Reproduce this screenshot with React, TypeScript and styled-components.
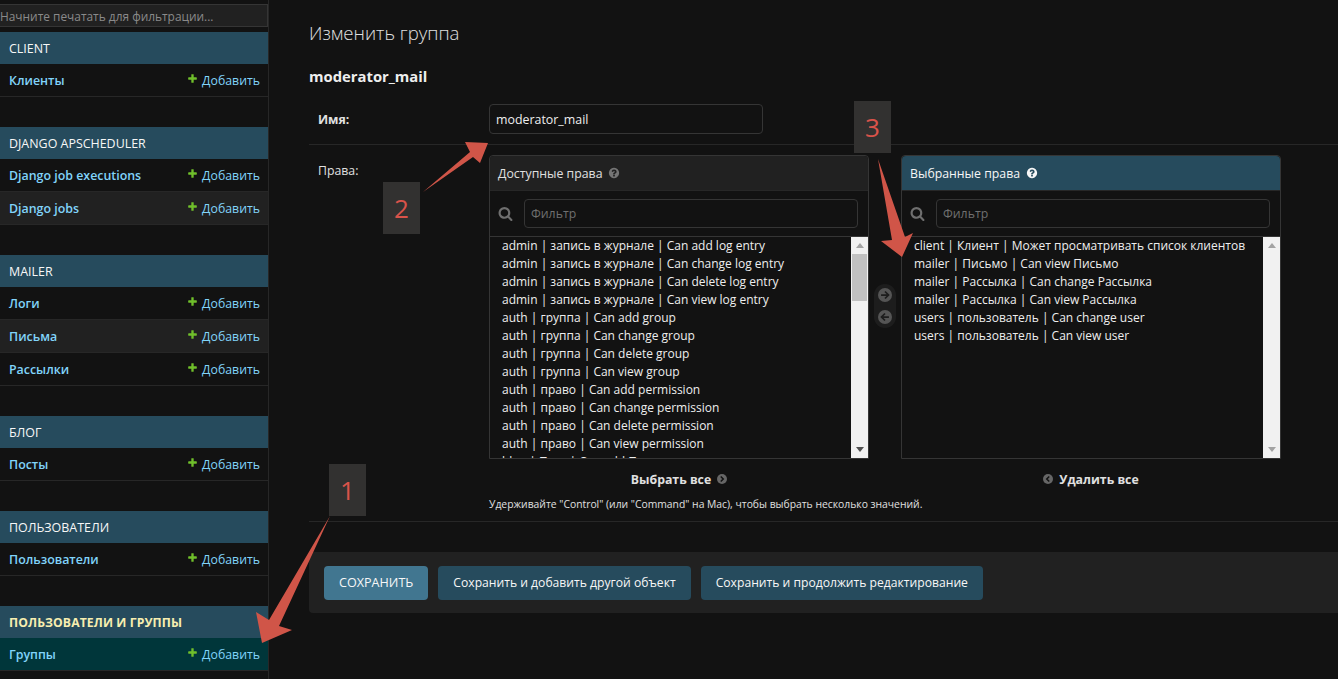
import React from "react";
import styled, { createGlobalStyle } from "styled-components";

const FONT = `"Open Sans", "Noto Sans", sans-serif`;

const GlobalStyle = createGlobalStyle`
	html, body {
		margin: 0;
		height: 100%;
		background: #121212;
		overflow: hidden;
	}
	* {
		box-sizing: border-box;
	}
`;

const Page = styled.div`
	position: relative;
	width: 1338px;
	height: 679px;
	display: flex;
	overflow: hidden;
	font-family: ${FONT};
	font-size: 13px;
	color: #eeeeee;
	background: #121212;
`;

const Sidebar = styled.nav`
	width: 269px;
	height: 679px;
	flex: none;
	border-right: 1px solid #272727;
	padding-top: 4px;
`;

const NavFilter = styled.input`
	display: block;
	width: 268px;
	height: 23px;
	margin-bottom: 5px;
	padding: 0;
	background: #212121;
	border: 1px solid #353535;
	border-left: 0;
	color: #eeeeee;
	font-family: ${FONT};
	font-size: 11.9px;
	&::placeholder {
		color: #8a8a8a;
		opacity: 1;
	}
`;

const AppSection = styled.section`
	margin-bottom: 30px;
`;

const AppHeader = styled.div<{ $current?: boolean }>`
	height: 32px;
	padding-left: 9px;
	display: flex;
	align-items: center;
	background: #264b5d;
	font-size: ${p => (p.$current ? "12.2px" : "12.45px")};
	font-weight: ${p => (p.$current ? 700 : 400)};
	color: ${p => (p.$current ? "#f7eeb0" : "#f7f7f7")};
	letter-spacing: ${p => (p.$current ? "0.1px" : "0")};
`;

const ModelRow = styled.div<{ $alt?: boolean; $current?: boolean }>`
	height: 33px;
	padding: 0 8px 0 9px;
	display: flex;
	align-items: center;
	justify-content: space-between;
	border-bottom: 1px solid #272727;
	background: ${p => (p.$current ? "#00363a" : p.$alt ? "#212121" : "#121212")};
`;

const ModelLink = styled.span`
	color: #81d4fa;
	font-size: 12.4px;
	font-weight: 600;
`;

const AddLink = styled.span`
	display: flex;
	align-items: center;
	gap: 4px;
	color: #81d4fa;
	font-size: 12.3px;
`;

const AddIcon = styled.svg`
	width: 11px;
	height: 11px;
	margin-top: -3px;
	fill: #70bf2b;
`;

const Main = styled.main`
	flex: 1;
	min-width: 0;
	padding: 20px 0 0 40px;
`;

const Title = styled.h1`
	margin: 0;
	height: 25px;
	line-height: 25px;
	font-size: 18.6px;
	font-weight: 300;
	color: #e0e0e0;
`;

const ObjectName = styled.h2`
	margin: 20px 0 0;
	height: 22px;
	line-height: 22px;
	font-size: 14.8px;
	font-weight: 700;
	color: #eeeeee;
`;

const FormRow = styled.div`
	display: flex;
	border-bottom: 1px solid #272727;
`;

const NameRow = styled(FormRow)`
	height: 47px;
	margin-top: 11px;
	padding-bottom: 4px;
	align-items: center;
`;

const FieldLabel = styled.label<{ $required?: boolean }>`
	display: block;
	width: 180px;
	flex: none;
	padding-left: 9px;
	font-size: 12.3px;
	font-weight: ${p => (p.$required ? 700 : 400)};
	color: #e0e0e0;
`;

const TextInput = styled.input`
	width: 274px;
	height: 30px;
	padding: 0 6px;
	background: #121212;
	border: 1px solid #353535;
	border-radius: 4px;
	color: #eeeeee;
	font-family: ${FONT};
	font-size: 12.4px;
`;

const PermissionsRow = styled(FormRow)`
	height: 377px;
	padding-top: 10px;
`;

const PermissionsLabel = styled(FieldLabel)`
	padding-top: 7px;
`;

const PermissionsBody = styled.div`
	width: 792px;
	flex: none;
`;

const Selector = styled.div`
	display: flex;
`;

const SelectorBox = styled.div`
	width: 380px;
	height: 304px;
	flex: none;
	display: flex;
	flex-direction: column;
	border: 1px solid #353535;
	border-radius: 4px 4px 0 0;
`;

const BoxTitle = styled.div<{ $chosen?: boolean }>`
	height: 35px;
	flex: none;
	display: flex;
	align-items: center;
	gap: 6px;
	padding-left: 8px;
	font-size: 12.3px;
	color: ${p => (p.$chosen ? "#f7f7f7" : "#e0e0e0")};
	background: ${p => (p.$chosen ? "#264b5d" : "#212121")};
	border-bottom: 1px solid #272727;
	border-radius: 4px 4px 0 0;
`;

const HelpIcon = styled.svg<{ $chosen?: boolean }>`
	width: 12px;
	height: 12px;
	fill: ${p => (p.$chosen ? "#f7f7f7" : "#757575")};
`;

const FilterBar = styled.div`
	height: 46px;
	flex: none;
	display: flex;
	align-items: center;
	gap: 11px;
	padding: 0 10px 1px 8px;
	border-bottom: 1px solid #353535;
`;

const SearchIcon = styled.svg`
	width: 15px;
	height: 15px;
	flex: none;
	fill: #6f6f6f;
`;

const FilterInput = styled.input`
	flex: 1;
	min-width: 0;
	height: 29px;
	padding: 0 6px;
	background: #121212;
	border: 1px solid #353535;
	border-radius: 4px;
	font-family: ${FONT};
	font-size: 12.3px;
	&::placeholder {
		color: #6f6f6f;
		opacity: 1;
	}
`;

const ListArea = styled.div`
	flex: 1;
	min-height: 0;
	display: flex;
`;

const OptionList = styled.div`
	flex: 1;
	min-width: 0;
	overflow: hidden;
	padding-left: 12px;
`;

const OptionRow = styled.div`
	height: 18px;
	line-height: 18px;
	font-size: 12px;
	white-space: nowrap;
	color: #eeeeee;
`;

const ScrollTrack = styled.div`
	position: relative;
	width: 17px;
	flex: none;
	background: #f1f1f1;
`;

const ScrollThumb = styled.div`
	position: absolute;
	left: 1px;
	right: 1px;
	top: 17px;
	height: 47px;
	background: #c1c1c1;
`;

const ScrollArrow = styled.div<{ $down?: boolean; $dim?: boolean }>`
	position: absolute;
	left: 4.5px;
	${p => (p.$down ? "bottom: 6px;" : "top: 6px;")}
	width: 0;
	height: 0;
	border-left: 4px solid transparent;
	border-right: 4px solid transparent;
	${p => (p.$down ? `border-top: 5px solid ${p.$dim ? "#a3a3a3" : "#505050"};` : "border-bottom: 5px solid #a3a3a3;")}
`;

const Movers = styled.div`
	width: 32px;
	flex: none;
	display: flex;
	justify-content: center;
	padding-top: 129px;
`;

const MoverPill = styled.div`
	width: 22px;
	height: 44px;
	display: flex;
	flex-direction: column;
	align-items: center;
	justify-content: center;
	gap: 8px;
	background: #1d1d1d;
	border-radius: 11px;
`;

const CircleIcon = styled.svg<{ $size: number }>`
	width: ${p => p.$size}px;
	height: ${p => p.$size}px;
	flex: none;
`;

const ChooseRow = styled.div`
	display: flex;
	gap: 32px;
	margin-top: 10px;
`;

const ChooseLink = styled.div`
	width: 380px;
	height: 20px;
	display: flex;
	align-items: center;
	justify-content: center;
	gap: 6px;
	font-size: 12.3px;
	font-weight: 700;
	color: #e0e0e0;
`;

const HelpText = styled.p`
	margin: 6px 0 0;
	height: 18px;
	line-height: 18px;
	font-size: 10.35px;
	color: #e0e0e0;
`;

const SubmitRow = styled.div`
	height: 61px;
	margin-top: 30px;
	display: flex;
	align-items: center;
	gap: 10px;
	padding-left: 15px;
	background: #212121;
	border-radius: 4px 0 0 4px;
`;

const SaveButton = styled.button<{ $primary?: boolean }>`
	height: 34px;
	padding: 0 15px;
	border: 0;
	border-radius: 4px;
	background: ${p => (p.$primary ? "#417690" : "#264b5d")};
	color: #f7f7f7;
	font-family: ${FONT};
	font-size: ${p => (p.$primary ? "12.6px" : "12.15px")};
	white-space: nowrap;
`;

const Marker = styled.div<{ $x: number; $y: number }>`
	position: absolute;
	left: ${p => p.$x}px;
	top: ${p => p.$y}px;
	width: 37px;
	height: 52px;
	display: flex;
	align-items: center;
	justify-content: center;
	background: #323130;
	color: #d9534a;
	font-size: 26px;
`;

const ArrowLayer = styled.svg`
	position: absolute;
	left: 0;
	top: 0;
	width: 1338px;
	height: 679px;
	pointer-events: none;
	fill: #d05548;
`;

const PLUS =
	"M1600 796v192q0 40-28 68t-68 28h-416v416q0 40-28 68t-68 28h-192q-40 0-68-28t-28-68v-416h-416q-40 0-68-28t-28-68v-192q0-40 28-68t68-28h416v-416q0-40 28-68t68-28h192q40 0 68 28t28 68v416h416q40 0 68 28t28 68z";
const QUESTION =
	"M1024 1376v-192q0-14-9-23t-23-9h-192q-14 0-23 9t-9 23v192q0 14 9 23t23 9h192q14 0 23-9t9-23zm256-672q0-88-55.5-163t-138.5-116-170-41q-243 0-371 213-15 24 8 42l132 100q7 6 19 6 16 0 25-12 53-68 86-92 34-24 86-24 48 0 85.5 26t37.5 59q0 38-20 61t-68 45q-63 28-115.5 86.5t-52.5 125.5v36q0 14 9 23t23 9h192q14 0 23-9t9-23q0-19 21.5-49.5t54.5-49.5q32-18 49-28.5t46-35 44.5-48 28-60.5 12.5-81zm384 192q0 209-103 385.5t-279.5 279.5-385.5 103-385.5-103-279.5-279.5-103-385.5 103-385.5 279.5-279.5 385.5-103 385.5 103 279.5 279.5 103 385.5z";
const SEARCH =
	"M1216 832q0-185-131.5-316.5t-316.5-131.5-316.5 131.5-131.5 316.5 131.5 316.5 316.5 131.5 316.5-131.5 131.5-316.5zm512 832q0 52-38 90t-90 38q-54 0-90-38l-343-342q-179 124-399 124-143 0-273.5-55.5t-225-150-150-225-55.5-273.5 55.5-273.5 150-225 225-150 273.5-55.5 273.5 55.5 225 150 150 225 55.5 273.5q0 220-124 399l343 343q37 37 37 90z";

const NAV = [
	{ title: "CLIENT", models: ["Клиенты"] },
	{ title: "DJANGO APSCHEDULER", models: ["Django job executions", "Django jobs"] },
	{ title: "MAILER", models: ["Логи", "Письма", "Рассылки"] },
	{ title: "БЛОГ", models: ["Посты"] },
	{ title: "ПОЛЬЗОВАТЕЛИ", models: ["Пользователи"] },
	{ title: "ПОЛЬЗОВАТЕЛИ И ГРУППЫ", models: ["Группы"], current: true }
];

const AVAILABLE = [
	"admin | запись в журнале | Can add log entry",
	"admin | запись в журнале | Can change log entry",
	"admin | запись в журнале | Can delete log entry",
	"admin | запись в журнале | Can view log entry",
	"auth | группа | Can add group",
	"auth | группа | Can change group",
	"auth | группа | Can delete group",
	"auth | группа | Can view group",
	"auth | право | Can add permission",
	"auth | право | Can change permission",
	"auth | право | Can delete permission",
	"auth | право | Can view permission",
	"blog | Пост | Can add Пост"
];

const CHOSEN = [
	"client | Клиент | Может просматривать список клиентов",
	"mailer | Письмо | Can view Письмо",
	"mailer | Рассылка | Can change Рассылка",
	"mailer | Рассылка | Can view Рассылка",
	"users | пользователь | Can change user",
	"users | пользователь | Can view user"
];

const ArrowCircle = ({ left }: { left?: boolean }) => (
	<CircleIcon $size={14} viewBox="0 0 16 16">
		<circle cx="8" cy="8" r="8" fill="#555555" />
		<g transform={left ? "rotate(180 8 8)" : undefined} fill="none" stroke="#1d1d1d" strokeWidth="2">
			<path d="M3.5 8h8M8 4l4 4-4 4" />
		</g>
	</CircleIcon>
);

const ChevronCircle = ({ left }: { left?: boolean }) => (
	<CircleIcon $size={10} viewBox="0 0 16 16">
		<circle cx="8" cy="8" r="8" fill="#666666" />
		<path d={left ? "M10 4L6 8l4 4" : "M6 4l4 4-4 4"} fill="none" stroke="#121212" strokeWidth="2.4" />
	</CircleIcon>
);

const PermissionBox = ({ title, options, chosen }: { title: string; options: string[]; chosen?: boolean }) => (
	<SelectorBox>
		<BoxTitle $chosen={chosen}>
			{title}
			<HelpIcon $chosen={chosen} viewBox="0 0 1792 1792">
				<path d={QUESTION} />
			</HelpIcon>
		</BoxTitle>
		<FilterBar>
			<SearchIcon viewBox="0 0 1792 1792">
				<path d={SEARCH} />
			</SearchIcon>
			<FilterInput placeholder="Фильтр" />
		</FilterBar>
		<ListArea>
			<OptionList>
				{options.map(option => (
					<OptionRow key={option}>{option}</OptionRow>
				))}
			</OptionList>
			<ScrollTrack>
				<ScrollArrow $dim={chosen} />
				{!chosen && <ScrollThumb />}
				<ScrollArrow $down $dim={chosen} />
			</ScrollTrack>
		</ListArea>
	</SelectorBox>
);

export default function App() {
	return (
		<Page>
			<GlobalStyle />
			<Sidebar>
				<NavFilter placeholder="Начните печатать для фильтрации..." />
				{NAV.map(app => (
					<AppSection key={app.title}>
						<AppHeader $current={app.current}>{app.title}</AppHeader>
						{app.models.map((model, i) => (
							<ModelRow key={model} $alt={i % 2 === 1} $current={app.current}>
								<ModelLink>{model}</ModelLink>
								<AddLink>
									<AddIcon viewBox="0 0 1792 1792">
										<path d={PLUS} />
									</AddIcon>
									Добавить
								</AddLink>
							</ModelRow>
						))}
					</AppSection>
				))}
			</Sidebar>
			<Main>
				<Title>Изменить группа</Title>
				<ObjectName>moderator_mail</ObjectName>
				<NameRow>
					<FieldLabel $required>Имя:</FieldLabel>
					<TextInput defaultValue="moderator_mail" />
				</NameRow>
				<PermissionsRow>
					<PermissionsLabel>Права:</PermissionsLabel>
					<PermissionsBody>
						<Selector>
							<PermissionBox title="Доступные права" options={AVAILABLE} />
							<Movers>
								<MoverPill>
									<ArrowCircle />
									<ArrowCircle left />
								</MoverPill>
							</Movers>
							<PermissionBox title="Выбранные права" options={CHOSEN} chosen />
						</Selector>
						<ChooseRow>
							<ChooseLink>
								Выбрать все
								<ChevronCircle />
							</ChooseLink>
							<ChooseLink>
								<ChevronCircle left />
								Удалить все
							</ChooseLink>
						</ChooseRow>
						<HelpText>Удерживайте "Control" (или "Command" на Mac), чтобы выбрать несколько значений.</HelpText>
					</PermissionsBody>
				</PermissionsRow>
				<SubmitRow>
					<SaveButton $primary>СОХРАНИТЬ</SaveButton>
					<SaveButton>Сохранить и добавить другой объект</SaveButton>
					<SaveButton>Сохранить и продолжить редактирование</SaveButton>
				</SubmitRow>
			</Main>
			<Marker $x={329} $y={464}>1</Marker>
			<Marker $x={383} $y={182}>2</Marker>
			<Marker $x={854} $y={101}>3</Marker>
			<ArrowLayer viewBox="0 0 1338 679">
				<polygon points="330,516 269,620 256,612 262,643 292,630 279,626" />
				<polygon points="423,192 470,152 465,142 488,143 480,163 473,157" />
				<polygon points="878,159 892,240 881,241 902,257 913,233 905,237" />
			</ArrowLayer>
		</Page>
	);
}
